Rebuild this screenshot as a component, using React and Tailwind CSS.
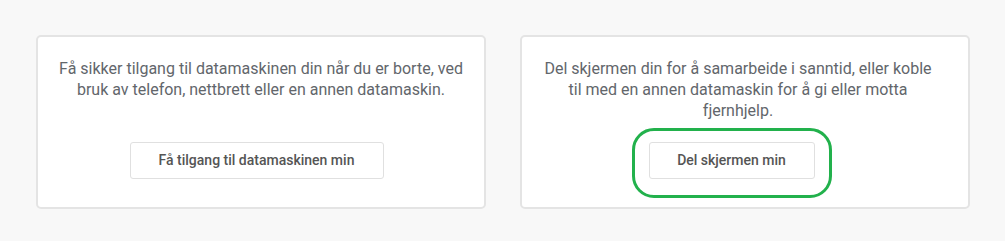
import React from 'react';

const cards = [
  {
    id: 'access',
    lines: ['Få sikker tilgang til datamaskinen din når du er borte, ved', 'bruk av telefon, nettbrett eller en annen datamaskin.'],
    button: 'Få tilgang til datamaskinen min',
    buttonWidth: 'w-[254px] mr-[9px]',
    textShift: '',
    highlighted: false,
  },
  {
    id: 'share',
    lines: ['Del skjermen din for å samarbeide i sanntid, eller koble', 'til med en annen datamaskin for å gi eller motta', 'fjernhjelp.'],
    button: 'Del skjermen min',
    buttonWidth: 'w-[166px] mr-[27px]',
    textShift: 'mr-[14px]',
    highlighted: true,
  },
];

function Card({ card }) {
  return (
    <div className="flex-1 h-[174px] bg-white border-2 border-[#e4e4e4] rounded-[5px] flex flex-col items-center justify-between pt-[21px] pb-[28px] px-4">
      <p className={`text-[16px] leading-[21px] text-[#62666b] text-center ${card.textShift}`}>
        {card.lines.map((line, i) => (
          <React.Fragment key={i}>
            {line}
            {i < card.lines.length - 1 && <br />}
          </React.Fragment>
        ))}
      </p>
      <div className={`relative ${card.buttonWidth}`}>
        {/* 강조 표시 */}
        {card.highlighted && (
          <div className="absolute -left-[17px] -right-[17px] -top-[14px] -bottom-[19px] border-[3px] border-[#22b14c] rounded-[22px] pointer-events-none"></div>
        )}
        <button className="w-full h-[37px] bg-white border border-[#e0e0e0] rounded-[3px] text-[14px] font-medium text-[#555] flex items-center justify-center">
          {card.button}
        </button>
      </div>
    </div>
  );
}

export default function App() {
  return (
    <div className="w-[1005px] h-[241px] bg-[#f8f8f8] pt-[35px] pl-[36px] pr-[35px] flex items-start gap-[34px]" style={{ fontFamily: 'Roboto, "Noto Sans", sans-serif' }}>
      {cards.map(card => (
        <Card key={card.id} card={card} />
      ))}
    </div>
  );
}
